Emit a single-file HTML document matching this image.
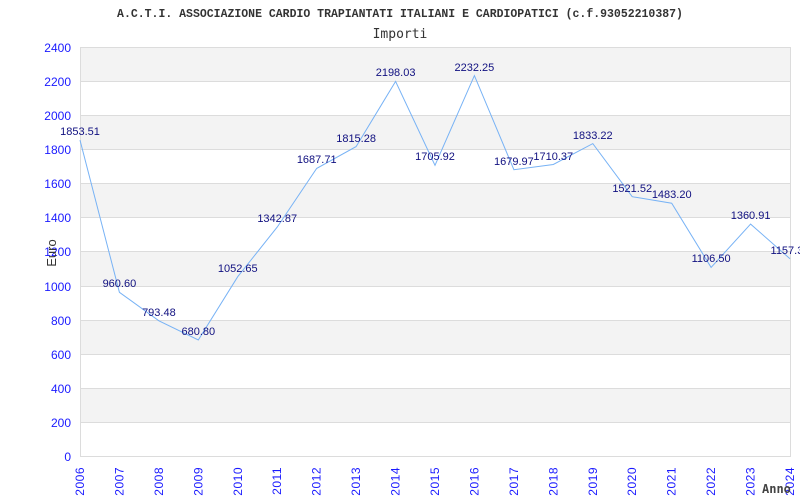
<!DOCTYPE html>
<html><head><meta charset="utf-8"><style>body{margin:0;background:#fff}svg{display:block}</style></head><body>
<svg width="800" height="500" xmlns="http://www.w3.org/2000/svg" font-family="Liberation Sans, sans-serif">
<rect width="800" height="500" fill="#fff"/>
<g fill="#f3f3f3">
<rect x="80" y="47" width="710" height="34"/>
<rect x="80" y="115" width="710" height="34"/>
<rect x="80" y="183" width="710" height="34"/>
<rect x="80" y="251" width="710" height="35"/>
<rect x="80" y="320" width="710" height="34"/>
<rect x="80" y="388" width="710" height="34"/>
</g>
<g stroke="#dcdcdc" stroke-width="1">
<line x1="80" y1="47.5" x2="790" y2="47.5"/><line x1="80" y1="81.5" x2="790" y2="81.5"/>
<line x1="80" y1="115.5" x2="790" y2="115.5"/><line x1="80" y1="149.5" x2="790" y2="149.5"/>
<line x1="80" y1="183.5" x2="790" y2="183.5"/><line x1="80" y1="217.5" x2="790" y2="217.5"/>
<line x1="80" y1="251.5" x2="790" y2="251.5"/><line x1="80" y1="286.5" x2="790" y2="286.5"/>
<line x1="80" y1="320.5" x2="790" y2="320.5"/><line x1="80" y1="354.5" x2="790" y2="354.5"/>
<line x1="80" y1="388.5" x2="790" y2="388.5"/><line x1="80" y1="422.5" x2="790" y2="422.5"/>
<line x1="80" y1="456.5" x2="790" y2="456.5"/>
<line x1="80.5" y1="47" x2="80.5" y2="457"/><line x1="790.5" y1="47" x2="790.5" y2="457"/>
</g>
<text x="400" y="17" text-anchor="middle" font-family="Liberation Mono, monospace" font-weight="bold" font-size="11.5" fill="#333">A.C.T.I. ASSOCIAZIONE CARDIO TRAPIANTATI ITALIANI E CARDIOPATICI (c.f.93052210387)</text>
<text x="400" y="38" text-anchor="middle" font-family="DejaVu Sans Mono, monospace" font-size="13" fill="#333">Importi</text>
<g fill="#1a1aff" font-size="12" text-anchor="end">
<text x="71" y="52">2400</text><text x="71" y="86">2200</text><text x="71" y="120">2000</text>
<text x="71" y="154">1800</text><text x="71" y="188">1600</text><text x="71" y="222">1400</text>
<text x="71" y="256">1200</text><text x="71" y="291">1000</text><text x="71" y="325">800</text>
<text x="71" y="359">600</text><text x="71" y="393">400</text><text x="71" y="427">200</text>
<text x="71" y="461">0</text>
</g>
<text transform="translate(56,253) rotate(-90)" text-anchor="middle" font-size="13" fill="#333">Euro</text>
<g fill="#1a1aff" font-size="12" text-anchor="end" letter-spacing="0.5">
<text transform="translate(84,467) rotate(-90)">2006</text>
<text transform="translate(123.4,467) rotate(-90)">2007</text>
<text transform="translate(162.9,467) rotate(-90)">2008</text>
<text transform="translate(202.3,467) rotate(-90)">2009</text>
<text transform="translate(241.8,467) rotate(-90)">2010</text>
<text transform="translate(281.2,467) rotate(-90)">2011</text>
<text transform="translate(320.7,467) rotate(-90)">2012</text>
<text transform="translate(360.1,467) rotate(-90)">2013</text>
<text transform="translate(399.6,467) rotate(-90)">2014</text>
<text transform="translate(439,467) rotate(-90)">2015</text>
<text transform="translate(478.4,467) rotate(-90)">2016</text>
<text transform="translate(517.9,467) rotate(-90)">2017</text>
<text transform="translate(557.3,467) rotate(-90)">2018</text>
<text transform="translate(596.8,467) rotate(-90)">2019</text>
<text transform="translate(636.2,467) rotate(-90)">2020</text>
<text transform="translate(675.7,467) rotate(-90)">2021</text>
<text transform="translate(715.1,467) rotate(-90)">2022</text>
<text transform="translate(754.6,467) rotate(-90)">2023</text>
<text transform="translate(794,467) rotate(-90)">2024</text>
</g>
<text x="762" y="493" font-family="DejaVu Sans Mono, monospace" font-weight="bold" font-size="12" fill="#444">Anno</text>
<polyline fill="none" stroke="#77b2f5" stroke-width="1" points="80,140.1 119.4,292.3 158.9,320.8 198.3,340 237.8,276.6 277.2,227.1 316.7,168.4 356.1,146.6 395.6,81.4 435,165.3 474.4,75.6 513.9,169.7 553.3,164.5 592.8,143.6 632.2,196.7 671.7,203.2 711.1,267.4 750.6,224.1 790,258.8"/>
<g fill="#101080" font-size="11" text-anchor="middle">
<text x="80" y="135">1853.51</text>
<text x="119.4" y="287">960.60</text>
<text x="158.9" y="316">793.48</text>
<text x="198.3" y="335">680.80</text>
<text x="237.8" y="272">1052.65</text>
<text x="277.2" y="222">1342.87</text>
<text x="316.7" y="163">1687.71</text>
<text x="356.1" y="142">1815.28</text>
<text x="395.6" y="76">2198.03</text>
<text x="435" y="160">1705.92</text>
<text x="474.4" y="71">2232.25</text>
<text x="513.9" y="165">1679.97</text>
<text x="553.3" y="160">1710.37</text>
<text x="592.8" y="139">1833.22</text>
<text x="632.2" y="192">1521.52</text>
<text x="671.7" y="198">1483.20</text>
<text x="711.1" y="262">1106.50</text>
<text x="750.6" y="219">1360.91</text>
<text x="790" y="254">1157.30</text>
</g>
</svg>
</body></html>
